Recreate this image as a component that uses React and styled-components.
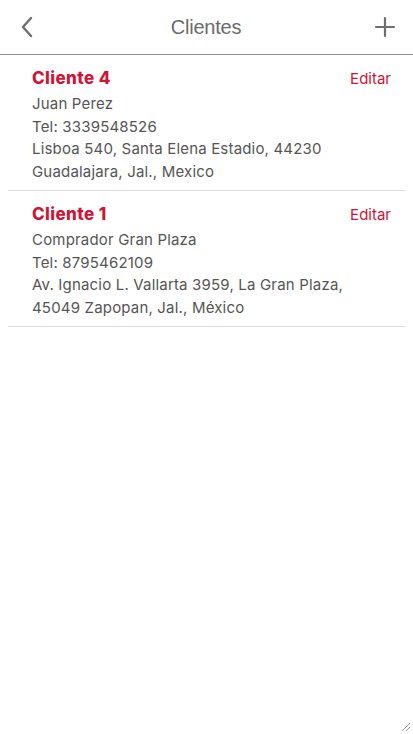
import React from "react";
import styled, { createGlobalStyle } from "styled-components";

const GlobalStyle = createGlobalStyle`
  html, body {
    margin: 0;
    padding: 0;
    background: #ffffff;
  }
  body {
    font-family: Inter, "Liberation Sans", Arial, sans-serif;
  }
`;

const Page = styled.div`
  position: relative;
  min-height: 100vh;
  background: #ffffff;
`;

const Header = styled.header`
  height: 55px;
  display: flex;
  align-items: center;
  justify-content: space-between;
  padding: 0 16px 0 15px;
  border-bottom: 1px solid #8f8f8f;
  box-sizing: border-box;
`;

const IconButton = styled.button`
  width: 24px;
  height: 24px;
  padding: 0;
  border: 0;
  background: none;
  display: flex;
  align-items: center;
  justify-content: center;
  cursor: pointer;
`;

const Title = styled.h1`
  margin: 0;
  font-family: "Liberation Sans", Arial, sans-serif;
  font-size: 20px;
  font-weight: normal;
  color: #6b6b6b;
  letter-spacing: -0.2px;
`;

const List = styled.div`
  margin: 0 8px;
`;

const Card = styled.div`
  padding: 12px 14px 7px 24px;
  border-bottom: 1px solid #dadada;
`;

const TitleRow = styled.div`
  display: flex;
  align-items: center;
  justify-content: space-between;
  height: 22px;
  margin-bottom: 4px;
`;

const ClientName = styled.span`
  font-size: 17px;
  font-weight: 800;
  color: #cf1437;
  letter-spacing: 0.4px;
`;

const EditLink = styled.a`
  font-size: 15px;
  color: #cf1437;
  text-decoration: none;
  cursor: pointer;
`;

const Line = styled.div`
  font-size: 15px;
  line-height: 22.5px;
  color: #555555;
  letter-spacing: 0.18px;
`;

const Grip = styled.svg`
  position: absolute;
  right: 2px;
  bottom: 2px;
`;

const clients = [
  {
    name: "Cliente 4",
    contact: "Juan Perez",
    tel: "3339548526",
    address: ["Lisboa 540, Santa Elena Estadio, 44230", "Guadalajara, Jal., Mexico"],
  },
  {
    name: "Cliente 1",
    contact: "Comprador Gran Plaza",
    tel: "8795462109",
    address: ["Av. Ignacio L. Vallarta 3959, La Gran Plaza,", "45049 Zapopan, Jal., México"],
  },
];

const App = () => {
  return (
    <Page>
      <GlobalStyle />
      <Header>
        <IconButton aria-label="Atrás">
          <svg width="16" height="22" viewBox="0 0 16 22">
            <path d="M12 2 L4 11 L12 20" fill="none" stroke="#6e6e6e" strokeWidth="2.4" strokeLinecap="round" strokeLinejoin="round" />
          </svg>
        </IconButton>
        <Title>Clientes</Title>
        <IconButton aria-label="Agregar">
          <svg width="22" height="22" viewBox="0 0 22 22">
            <path d="M11 2 V20 M2 11 H20" stroke="#6e6e6e" strokeWidth="2.2" strokeLinecap="round" />
          </svg>
        </IconButton>
      </Header>

      <List>
        {clients.map((c) => (
          <Card key={c.name}>
            <TitleRow>
              <ClientName>{c.name}</ClientName>
              <EditLink>Editar</EditLink>
            </TitleRow>
            <Line>{c.contact}</Line>
            <Line>Tel: {c.tel}</Line>
            {c.address.map((a) => (
              <Line key={a}>{a}</Line>
            ))}
          </Card>
        ))}
      </List>

      <Grip width="12" height="12" viewBox="0 0 12 12">
        <path d="M11 3 L3 11 M11 7 L7 11" stroke="#9a9a9a" strokeWidth="1" />
      </Grip>
    </Page>
  );
};

export default App;
